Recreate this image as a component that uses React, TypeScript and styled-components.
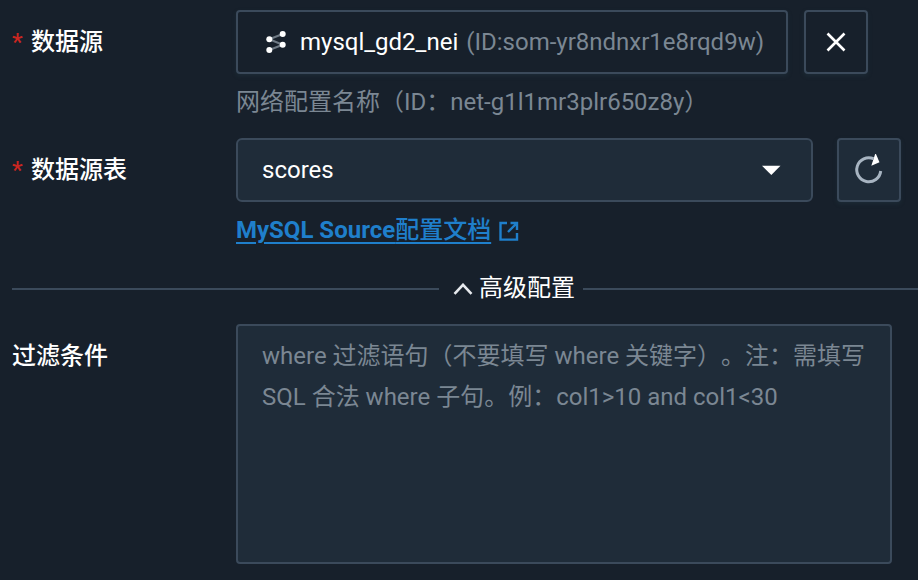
import React from "react";
import styled, { createGlobalStyle } from "styled-components";

const GlobalStyle = createGlobalStyle`
  *, *::before, *::after { box-sizing: border-box; }
  body {
    margin: 0;
    height: 580px;
    overflow: hidden;
    background: #17202b;
    color: #fff;
    font: 400 24px/40px Roboto, "Noto Sans CJK SC", sans-serif;
    text-spacing-trim: space-all;
  }
  svg { flex-shrink: 0; }
`;

const Form = styled.form`
  width: 918px;
  height: 580px;
  padding: 10px 0 0 12px;
  white-space: nowrap;
`;

const Row = styled.div<{ $height: number }>`
  display: flex;
  align-items: flex-start;
  height: ${(p) => p.$height}px;
`;

const Label = styled.label`
  display: flex;
  flex: 0 0 224px;
  height: 64px;
  line-height: 65px;
  font-weight: 500;
`;

const Required = styled.span`
  width: 19px;
  color: #ca2621;
  font-weight: 500;
`;

const Field = styled.div`
  flex: 1;
`;

const Controls = styled.div<{ $gap: number }>`
  display: flex;
  gap: ${(p) => p.$gap}px;
`;

const Box = styled.div<{ $width: number; $filled?: boolean }>`
  display: flex;
  align-items: center;
  width: ${(p) => p.$width}px;
  height: 64px;
  padding: 0 20px 0 24px;
  border: 2px solid #3b4a5b;
  border-radius: ${(p) => (p.$filled ? 6 : 4)}px;
  background: ${(p) => (p.$filled ? "#1f2c39" : "#17202b")};
  box-shadow: ${(p) => (p.$filled ? "none" : "0 2px 4px rgba(34, 57, 69, 0.4)")};
`;

const SourceName = styled.span`
  margin: 0 8px 0 10px;
`;

const Muted = styled.span`
  color: #7b8793;
`;

const IconButton = styled.button<{ $filled?: boolean }>`
  display: flex;
  align-items: center;
  justify-content: center;
  width: 64px;
  height: 64px;
  padding: 0;
  border: 2px solid #3b4a5b;
  border-radius: 4px;
  background: ${(p) => (p.$filled ? "#1f2c39" : "#17202b")};
  box-shadow: 0 2px 4px rgba(34, 57, 69, 0.4);
`;

const Help = styled.div`
  margin-top: 8px;
  color: #7b8793;
`;

const SelectValue = styled.span`
  flex: 1;
`;

const DocLink = styled.a`
  display: flex;
  align-items: center;
  gap: 8px;
  margin-top: 8px;
  color: #1f7fcb;
  font-weight: 700;
`;

const LinkText = styled.span`
  text-decoration: underline;
  text-decoration-thickness: 2px;
  text-underline-offset: 4px;
`;

const LinkHan = styled.span`
  font-weight: 500;
`;

const Divider = styled.div`
  display: flex;
  align-items: center;
  height: 42px;
  margin-bottom: 14px;
`;

const Line = styled.span<{ $width?: number }>`
  flex: ${(p) => (p.$width ? `0 0 ${p.$width}px` : "1")};
  height: 2px;
  background: #3b4a5b;
`;

const Toggle = styled.span`
  display: flex;
  align-items: center;
  gap: 6px;
  width: 144px;
  padding-left: 14px;
`;

const ToggleText = styled.span`
  height: 40px;
  line-height: 38px;
`;

const TextArea = styled.div`
  width: 656px;
  height: 240px;
  padding: 10px 0 10px 24px;
  border: 2px solid #3b4a5b;
  border-radius: 4px;
  background: #1f2c39;
  color: #7b8793;
  line-height: 41px;
`;

const NodesIcon = () => (
  <svg width="28" height="26" viewBox="0 0 28 26" fill="none">
    <path d="M7.3 10.3 20.7 5M7.3 10.3 20.7 15.7M20.7 15.7 7.3 21" stroke="#6f7a85" strokeWidth="2" />
    <g fill="#fff">
      <circle cx="7.3" cy="10.3" r="3" />
      <circle cx="20.7" cy="5" r="3" />
      <circle cx="20.7" cy="15.7" r="3" />
      <circle cx="7.3" cy="21" r="3" />
    </g>
  </svg>
);

const CloseIcon = () => (
  <svg width="20" height="20" viewBox="0 0 20 20">
    <path d="m1.5 1.5 17 17m0-17-17 17" stroke="#fff" strokeWidth="2.6" />
  </svg>
);

const CaretIcon = () => (
  <svg width="38" height="10" viewBox="0 0 38 10">
    <path d="M9 0.8h18.5l-9.2 9.2z" fill="#fff" />
  </svg>
);

const RefreshIcon = () => (
  <svg width="32" height="32" viewBox="0 0 32 32" fill="none">
    <path d="M20.5 4.7A12 12 0 1 0 27.7 17" stroke="#a7b4c1" strokeWidth="3" />
    <path d="m22.5-1 4 9.3-8.2 3.5z" fill="#fff" />
  </svg>
);

const ExternalIcon = () => (
  <svg width="20" height="22" viewBox="0 0 20 22" fill="none" stroke="#1f7fcb" strokeWidth="2.4">
    <path d="M8 4H1.5v16.6H18V14M11.5 4H18v7M18 4 9 13" />
  </svg>
);

const ChevronIcon = () => (
  <svg width="20" height="12" viewBox="0 0 20 12">
    <path d="m1.5 10.8 8.5-9 8.5 9" fill="none" stroke="#e6e9ed" strokeWidth="2.6" />
  </svg>
);

export default function App() {
  return (
    <>
      <GlobalStyle />
      <Form>
        <Row $height={128}>
          <Label>
            <Required>*</Required>数据源
          </Label>
          <Field>
            <Controls $gap={16}>
              <Box $width={552}>
                <NodesIcon />
                <SourceName>mysql_gd2_nei</SourceName>
                <Muted>(ID:som-yr8ndnxr1e8rqd9w)</Muted>
              </Box>
              <IconButton type="button" aria-label="清除">
                <CloseIcon />
              </IconButton>
            </Controls>
            <Help>网络配置名称（ID：net-g1l1mr3plr650z8y）</Help>
          </Field>
        </Row>
        <Row $height={130}>
          <Label>
            <Required>*</Required>数据源表
          </Label>
          <Field>
            <Controls $gap={24}>
              <Box $width={577} $filled>
                <SelectValue>scores</SelectValue>
                <CaretIcon />
              </Box>
              <IconButton type="button" aria-label="刷新" $filled>
                <RefreshIcon />
              </IconButton>
            </Controls>
            <DocLink>
              <LinkText>
                MySQL Source<LinkHan>配置文档</LinkHan>
              </LinkText>
              <ExternalIcon />
            </DocLink>
          </Field>
        </Row>
        <Divider>
          <Line $width={427} />
          <Toggle>
            <ChevronIcon />
            <ToggleText>高级配置</ToggleText>
          </Toggle>
          <Line />
        </Divider>
        <Row $height={240}>
          <Label>过滤条件</Label>
          <TextArea>
            where 过滤语句（不要填写 where 关键字）。注：需填写
            <br />
            SQL 合法 where 子句。例：col1&gt;10 and col1&lt;30
          </TextArea>
        </Row>
      </Form>
    </>
  );
}
